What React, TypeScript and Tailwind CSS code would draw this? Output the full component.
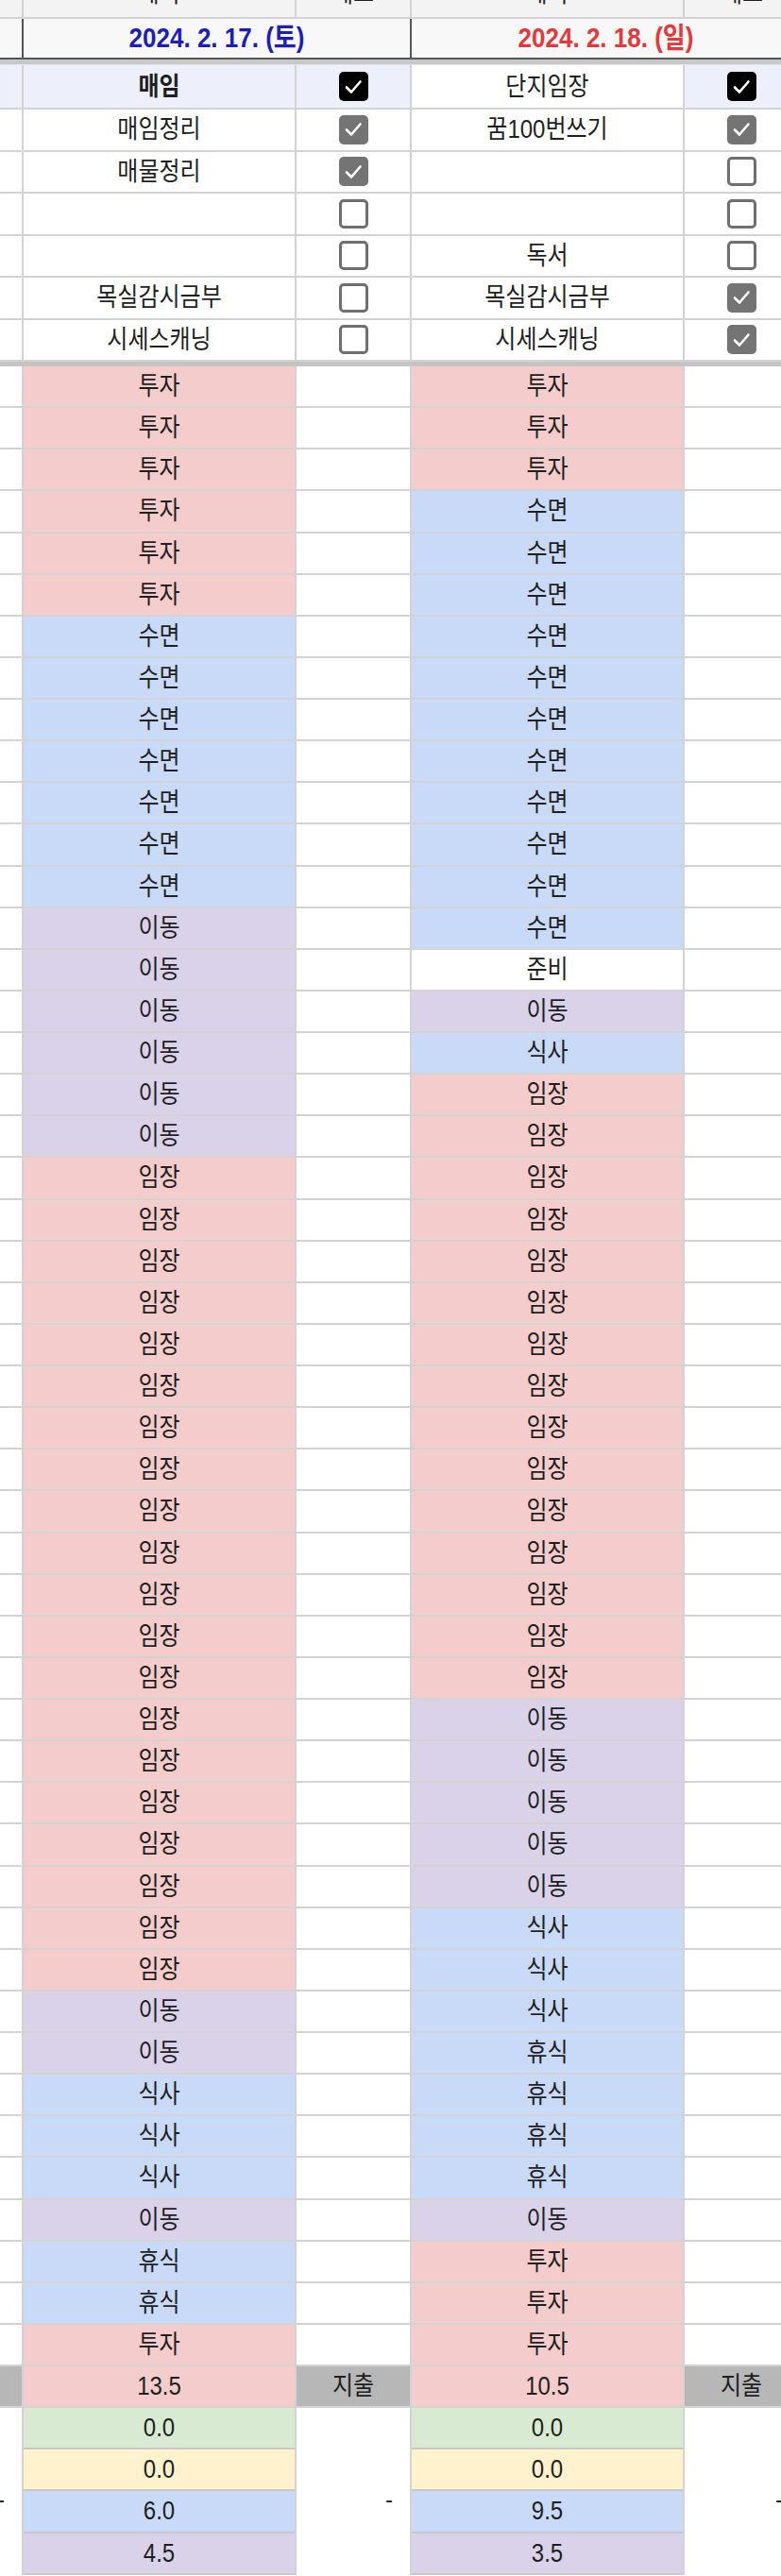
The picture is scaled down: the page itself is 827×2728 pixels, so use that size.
const COLORS: Record<string, string> = {
  투자: 'bg-[#f4cccc]',
  임장: 'bg-[#f4cccc]',
  수면: 'bg-[#c9daf8]',
  식사: 'bg-[#c9daf8]',
  휴식: 'bg-[#c9daf8]',
  이동: 'bg-[#d9d2e9]',
  준비: 'bg-white',
}

const rep = (word: string, n: number) => Array.from({ length: n }, () => word)

const leftPlan = [
  ...rep('투자', 6), ...rep('수면', 7), ...rep('이동', 6), ...rep('임장', 20),
  ...rep('이동', 2), ...rep('식사', 3), '이동', ...rep('휴식', 2), '투자',
]

const rightPlan = [
  ...rep('투자', 3), ...rep('수면', 11), '준비', '이동', '식사', ...rep('임장', 15),
  ...rep('이동', 5), ...rep('식사', 3), ...rep('휴식', 4), '이동', ...rep('투자', 3),
]

type Box = 'on' | 'done' | 'off'

const checklist: { left: string; lbox: Box; right: string; rbox: Box }[] = [
  { left: '매임정리', lbox: 'done', right: '꿈100번쓰기', rbox: 'done' },
  { left: '매물정리', lbox: 'done', right: '', rbox: 'off' },
  { left: '', lbox: 'off', right: '', rbox: 'off' },
  { left: '', lbox: 'off', right: '독서', rbox: 'off' },
  { left: '목실감시금부', lbox: 'off', right: '목실감시금부', rbox: 'done' },
  { left: '시세스캐닝', lbox: 'off', right: '시세스캐닝', rbox: 'done' },
]

const totals = [
  { l: '0.0', r: '0.0', bg: 'bg-[#d9ead3]' },
  { l: '0.0', r: '0.0', bg: 'bg-[#fff2cc]' },
  { l: '6.0', r: '9.5', bg: 'bg-[#c9daf8]' },
  { l: '4.5', r: '3.5', bg: 'bg-[#d9d2e9]' },
]

const grid = 'grid grid-cols-[25px_289px_122px_289px_122px]'
const cell = 'flex items-center justify-center border-r-2 border-[#d3d3d3]'

// the sheet font in the screenshot is a bit taller than wide
const T = ({ children }: { children: React.ReactNode }) => (
  <span className="inline-block scale-y-[1.15]">{children}</span>
)

function CheckBox({ state }: { state: Box }) {
  if (state === 'off') {
    return <div className="w-[31px] h-[31px] rounded-[5px] border-[3px] border-[#6f6f6f] bg-white" />
  }
  return (
    <div className={`w-[31px] h-[31px] rounded-[5px] flex items-center justify-center ${state === 'on' ? 'bg-black' : 'bg-[#747474]'}`}>
      <svg width="22" height="22" viewBox="0 0 22 22" fill="none">
        <path d="M4 11.5 L9 16.5 L18.5 5.5" stroke="white" strokeWidth="2.6" strokeLinecap="round" strokeLinejoin="round" />
      </svg>
    </div>
  )
}

export default function App() {
  return (
    <div className="w-[827px] h-[2728px] overflow-hidden bg-white text-[#1f1f1f] font-['Liberation_Sans','Noto_Sans_CJK_KR',sans-serif]">
      <div className="w-[847px] flex flex-col">
        {/* column header, cut at the top */}
        <div className={`${grid} h-[20px] bg-[#f3f3f3] border-b-2 border-[#d3d3d3] overflow-hidden`}>
          <div className="border-r-2 border-[#d3d3d3]" />
          <div className="border-r-2 border-[#d3d3d3] flex justify-center"><span className="text-[24px] leading-none -mt-[18px]">계획</span></div>
          <div className="border-r-2 border-[#d3d3d3] flex justify-center"><span className="text-[24px] leading-none -mt-[18px]">체크</span></div>
          <div className="border-r-2 border-[#d3d3d3] flex justify-center"><span className="text-[24px] leading-none -mt-[18px]">계획</span></div>
          <div className="flex justify-center"><span className="text-[24px] leading-none -mt-[18px]">체크</span></div>
        </div>

        {/* dates */}
        <div className={`${grid} h-[43px] bg-[#f8f8f8] border-b-2 border-[#555555]`}>
          <div className="border-r-2 border-[#555555]" />
          <div className="col-span-2 flex items-center justify-center border-r-2 border-[#555555] text-[26px] font-bold text-[#1d1db8]"><T>2024. 2. 17. (토)</T></div>
          <div className="col-span-2 flex items-center justify-center text-[26px] font-bold text-[#e3393b]"><T>2024. 2. 18. (일)</T></div>
        </div>
        <div className="h-[6px] bg-[#c8c8c8] border-b border-[#e4e4e4]" />

        {/* checklist */}
        <div className={`${grid} h-[47px] border-b-2 border-[#d3d3d3] text-[24px]`}>
          <div className={`${cell} bg-[#edf0fb]`} />
          <div className={`${cell} bg-[#edf0fb] font-bold`}><T>매임</T></div>
          <div className={`${cell} bg-[#edf0fb]`}><CheckBox state="on" /></div>
          <div className={`${cell} bg-white`}><T>단지임장</T></div>
          <div className={`${cell} bg-[#edf0fb]`}><CheckBox state="on" /></div>
        </div>
        {checklist.map((row, i) => (
          <div key={i} className={`${grid} h-[44.5px] border-b-2 border-[#d3d3d3] text-[24px]`}>
            <div className={cell} />
            <div className={cell}><T>{row.left}</T></div>
            <div className={cell}><CheckBox state={row.lbox} /></div>
            <div className={cell}><T>{row.right}</T></div>
            <div className={cell}><CheckBox state={row.rbox} /></div>
          </div>
        ))}
        <div className="h-[5px] bg-[#c4c4c4]" />

        {/* hourly plan */}
        {leftPlan.map((l, i) => (
          <div key={i} className={`${grid} h-[44.14px] border-b-2 border-[#d3d3d3] text-[24px]`}>
            <div className={cell} />
            <div className={`${cell} ${COLORS[l]}`}><T>{l}</T></div>
            <div className={cell} />
            <div className={`${cell} ${COLORS[rightPlan[i]]}`}><T>{rightPlan[i]}</T></div>
            <div className={cell} />
          </div>
        ))}

        {/* sums */}
        <div className={`${grid} h-[44.14px] border-b-2 border-[#d3d3d3] text-[24px]`}>
          <div className={`${cell} bg-[#b7b7b7]`} />
          <div className={`${cell} bg-[#f4cccc]`}><T>13.5</T></div>
          <div className={`${cell} bg-[#b7b7b7]`}><T>지출</T></div>
          <div className={`${cell} bg-[#f4cccc]`}><T>10.5</T></div>
          <div className={`${cell} bg-[#b7b7b7]`}><T>지출</T></div>
        </div>
        <div className={`${grid} h-[165px] text-[24px]`}>
          <div className="border-r-2 border-[#d3d3d3] flex items-center justify-end pr-[18px] pt-[18px]">-</div>
          <div className="flex flex-col border-r-2 border-[#d3d3d3]">
            {totals.map((t, i) => (
              <div key={i} className={`h-[44.14px] shrink-0 flex items-center justify-center border-b-2 border-[#c8c8c8] ${t.bg}`}><T>{t.l}</T></div>
            ))}
          </div>
          <div className="border-r-2 border-[#d3d3d3] flex items-center justify-end pr-[18px] pt-[18px]">-</div>
          <div className="flex flex-col border-r-2 border-[#d3d3d3] overflow-hidden">
            {totals.map((t, i) => (
              <div key={i} className={`h-[44.14px] shrink-0 flex items-center justify-center border-b-2 border-[#c8c8c8] ${t.bg}`}><T>{t.r}</T></div>
            ))}
          </div>
          <div className="flex items-center justify-end pr-[18px] pt-[18px]">-</div>
        </div>
      </div>
    </div>
  )
}
